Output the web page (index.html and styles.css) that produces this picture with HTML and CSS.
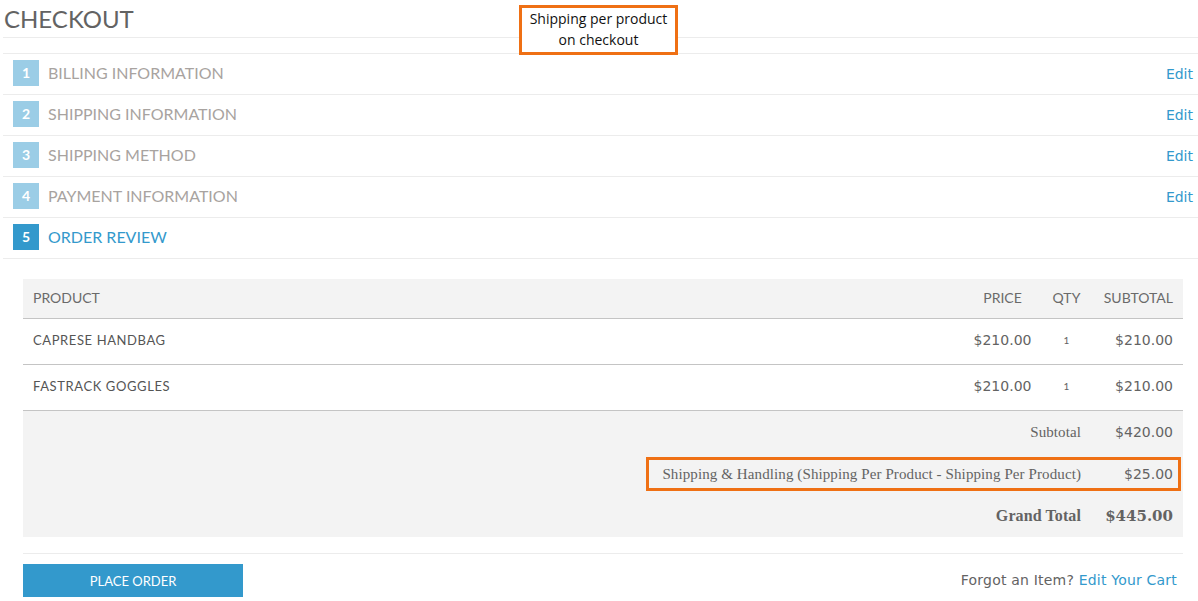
FILE: index.html
```html
<!DOCTYPE html>
<html lang="en">
<head>
  <meta charset="UTF-8">
  <meta name="viewport" content="width=device-width, initial-scale=1.0">
  <title>Checkout</title>
  <link rel="stylesheet" href="styles.css">
</head>
<body>

  <div class="page">
    <h1 class="page-title">CHECKOUT</h1>

    <div class="note">Shipping per product<br>on checkout</div>

    <ol class="steps">
      <li class="step">
        <span class="step-num">1</span>
        <span class="step-title">BILLING INFORMATION</span>
        <a class="step-edit" href="#">Edit</a>
      </li>
      <li class="step">
        <span class="step-num">2</span>
        <span class="step-title">SHIPPING INFORMATION</span>
        <a class="step-edit" href="#">Edit</a>
      </li>
      <li class="step">
        <span class="step-num">3</span>
        <span class="step-title">SHIPPING METHOD</span>
        <a class="step-edit" href="#">Edit</a>
      </li>
      <li class="step">
        <span class="step-num">4</span>
        <span class="step-title">PAYMENT INFORMATION</span>
        <a class="step-edit" href="#">Edit</a>
      </li>
      <li class="step active">
        <span class="step-num">5</span>
        <span class="step-title">ORDER REVIEW</span>
      </li>
    </ol>

    <section class="review">
      <div class="review-table-wrap">
        <table class="review-table">
          <thead>
            <tr>
              <th class="col-name">PRODUCT</th>
              <th class="col-price">PRICE</th>
              <th class="col-qty">QTY</th>
              <th class="col-sub">SUBTOTAL</th>
            </tr>
          </thead>
          <tbody>
            <tr>
              <td class="col-name"><span class="product-name">CAPRESE HANDBAG</span></td>
              <td class="col-price price">$210.00</td>
              <td class="col-qty qty">1</td>
              <td class="col-sub price">$210.00</td>
            </tr>
            <tr>
              <td class="col-name"><span class="product-name">FASTRACK GOGGLES</span></td>
              <td class="col-price price">$210.00</td>
              <td class="col-qty qty">1</td>
              <td class="col-sub price">$210.00</td>
            </tr>
          </tbody>
          <tfoot>
            <tr>
              <td class="total-label" colspan="3">Subtotal</td>
              <td class="total-value">$420.00</td>
            </tr>
            <tr>
              <td class="total-label" colspan="3">Shipping &amp; Handling (Shipping Per Product - Shipping Per Product)</td>
              <td class="total-value">$25.00</td>
            </tr>
            <tr class="grand">
              <td class="total-label" colspan="3">Grand Total</td>
              <td class="total-value">$445.00</td>
            </tr>
          </tfoot>
        </table>
        <div class="highlight"></div>
      </div>

      <div class="review-actions">
        <button class="place-order" type="button">PLACE ORDER</button>
        <p class="forgot">Forgot an Item? <a href="#">Edit Your Cart</a></p>
      </div>
    </section>
  </div>

</body>
</html>
```

FILE: styles.css
```css
body {
  margin: 0;
  font-family: Lato, "Open Sans", sans-serif;
  color: #636363;
  background: #fff;
}
a {
  color: #3399cc;
  text-decoration: none;
}
.page {
  position: relative;
  padding-left: 3px;
}
.page-title {
  margin: 0;
  height: 37px;
  padding-left: 1px;
  font-size: 24px;
  font-weight: 400;
  line-height: 38px;
  color: #636363;
  border-bottom: 1px solid #ececec;
}

/* annotation */
.note {
  position: absolute;
  left: 519px;
  top: 5px;
  width: 153px;
  height: 44px;
  border: 3px solid #ef7014;
  font-family: "Open Sans", "Liberation Sans", sans-serif;
  font-size: 14px;
  line-height: 21px;
  color: #111;
  text-align: center;
  background: #fff;
}

/* steps */
.steps {
  list-style: none;
  margin: 15px 0 0;
  padding: 0;
  border-top: 1px solid #ececec;
}
.step {
  display: flex;
  align-items: center;
  height: 38px;
  padding: 0 5px 2px 10px;
  border-bottom: 1px solid #ececec;
}
.step-num {
  width: 26px;
  height: 26px;
  margin-right: 9px;
  background: #9bcde6;
  color: #fff;
  font-size: 14px;
  font-weight: 700;
  line-height: 26px;
  text-align: center;
}
.step-title {
  flex: 1;
  position: relative;
  top: -1px;
  font-size: 16px;
  color: #a8a3a0;
}
.step-edit {
  position: relative;
  top: 1px;
  font-family: "DejaVu Sans", Verdana, sans-serif;
  font-size: 14px;
}
.step.active .step-num {
  background: #3399cc;
}
.step.active .step-title {
  color: #3399cc;
}

/* review */
.review {
  padding: 20px 15px 0 20px;
}
.review-table-wrap {
  position: relative;
}
.review-table {
  width: 100%;
  border-collapse: collapse;
}
.review-table thead th {
  height: 37px;
  padding: 0 10px 2px;
  background: #f3f3f3;
  font-size: 14px;
  font-weight: 400;
  color: #6a6a6a;
  border-bottom: 1px solid #c4c4c4;
}
.review-table tbody td {
  height: 42px;
  padding: 0 10px 3px;
  border-bottom: 1px solid #c4c4c4;
}
.col-name {
  text-align: left;
}
.col-price {
  width: 59px;
  text-align: center;
}
.col-qty {
  width: 29px;
  text-align: center;
}
.col-sub {
  width: 72px;
  text-align: right;
}
.product-name {
  position: relative;
  top: -2px;
  font-size: 13px;
  font-weight: 400;
  letter-spacing: 0.6px;
  color: #555;
}
.price {
  font-family: "DejaVu Sans", Verdana, sans-serif;
  font-size: 14px;
  color: #636363;
}
.qty {
  font-size: 10px;
}
.review-table tfoot {
  background: #f3f3f3;
}
.review-table tfoot td {
  height: 42px;
  padding: 0 10px;
  text-align: right;
}
.total-label {
  font-family: "Liberation Serif", "DejaVu Serif", serif;
  font-size: 15px;
  letter-spacing: 0.1px;
  color: #636363;
}
.total-value {
  width: 72px;
  font-family: "DejaVu Sans", Verdana, sans-serif;
  font-size: 14px;
  color: #636363;
}
.grand .total-label {
  font-weight: 700;
  font-size: 16px;
}
.grand .total-value {
  font-family: "DejaVu Serif", serif;
  font-weight: 700;
  font-size: 15px;
}
.highlight {
  position: absolute;
  left: 623px;
  top: 178px;
  width: 529px;
  height: 28px;
  border: 3px solid #ef7014;
}
.review-actions {
  display: flex;
  justify-content: space-between;
  align-items: center;
  margin-top: 16px;
  padding-top: 10px;
  border-top: 1px solid #ececec;
}
.place-order {
  width: 220px;
  height: 33px;
  border: none;
  background: #3399cc;
  color: #fff;
  font-family: Lato, "Open Sans", sans-serif;
  font-size: 13px;
  cursor: pointer;
}
.forgot {
  margin: 0 6px 2px 0;
  font-family: "DejaVu Sans", Verdana, sans-serif;
  font-size: 14px;
  letter-spacing: 0.2px;
  color: #636363;
}
```
